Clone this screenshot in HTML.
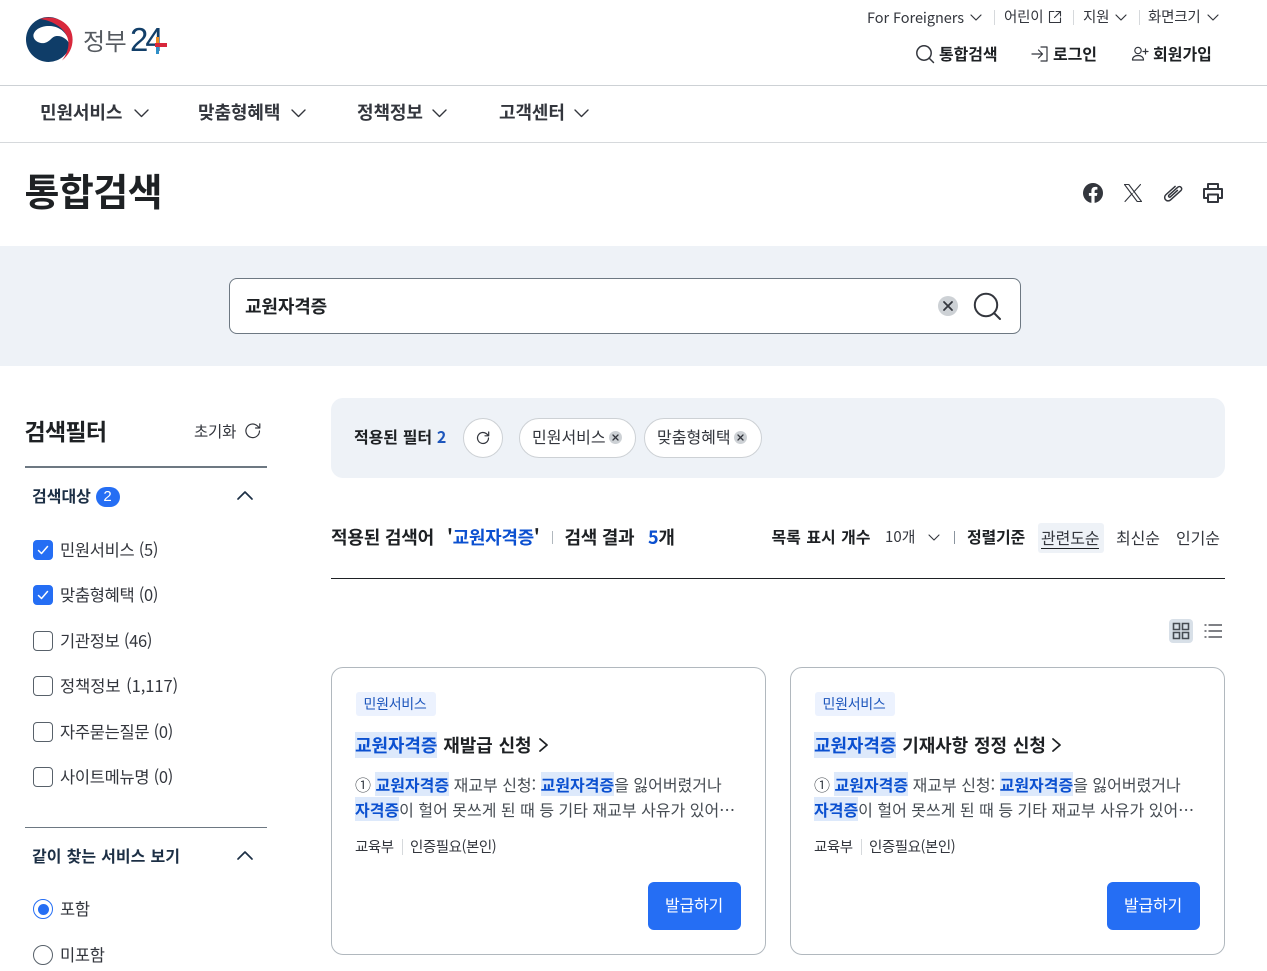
<!DOCTYPE html>
<html lang="ko"><head><meta charset="utf-8"><title>통합검색 | 정부24</title>
<style>
*{box-sizing:border-box}
html,body{margin:0;padding:0;background:#fff}
body{width:1267px;height:971px;overflow:hidden;position:relative;font-family:"Liberation Sans","Noto Sans CJK KR",sans-serif;color:#1e2124}
.t,.b,svg.a{position:absolute}
.t{white-space:nowrap;line-height:24px;height:24px;font-family:"Noto Sans CJK KR","Liberation Sans",sans-serif;font-size:15px;letter-spacing:-.3px}
.l{font-family:"Liberation Sans","Noto Sans CJK KR",sans-serif}
.s{font-weight:700}
.c{color:#33363d}
.i{font-size:16.5px;letter-spacing:-.3px;color:#33363d;left:60px}
mark{background:#dde9fb;color:#0b50d0;font-weight:700}
svg{fill:none;stroke:#33363d;stroke-width:1.5;stroke-linecap:round;stroke-linejoin:round}
.card{position:absolute;top:667px;width:435px;height:288px;border:1px solid #b1b8be;border-radius:12px;background:#fff}
.tag{position:absolute;left:24px;top:24px;width:80px;height:24px;background:#ecf2fe;border-radius:3px;color:#1d56bc;font-size:14px;line-height:24px;padding-right:2px;text-align:center;font-family:"Noto Sans CJK KR",sans-serif;letter-spacing:-.3px}
.btn{position:absolute;left:316px;top:214px;width:93px;height:48px;background:#256ef4;border-radius:6px;color:#fff;font-size:16px;line-height:44px;padding-right:1px;text-align:center;font-family:"Noto Sans CJK KR",sans-serif;letter-spacing:-.2px}
.box{position:absolute;left:33px;width:20px;height:20px;border-radius:4px;border:1.5px solid #58616a;background:#fff}
.box.on{background:#256ef4;border-color:#256ef4}
.ct{left:23px;top:65px;font-size:18px;letter-spacing:-.1px;word-spacing:1px}
.cb{left:23px;font-size:16px;color:#464c53;letter-spacing:0}
.m{font-size:14.5px;letter-spacing:-.45px;color:#33363d;top:167px}
.n{top:100px;font-size:18px;letter-spacing:-.1px;color:#33363d}
.h{top:41px;font-size:16px;letter-spacing:-.1px}
</style></head><body>

<!-- logo -->
<svg class="a" style="left:25px;top:17px;stroke:none" width="48" height="46" viewBox="0 0 48 46">
<circle cx="23.500" cy="22.500" r="22.500" fill="#0f3d68"/>
<path fill="#fff" d="M8.500 17.500C10 12 17 8.500 25 9 35 9.500 43 16 45 28 43 22.500 37 18.500 31.500 19 26.500 19.500 25 25 19.500 26 14 27 7.500 23 8.500 17.500z"/>
<path fill="#d8283c" d="M15 2C26-2 39 2 45 12c5 9.500 3 23-8 31.500 5-6.500 7.500-14 6-21C41 12 28 3.500 15 2z"/>
</svg>
<div class="t" style="left:83px;top:28px;font-size:24px;color:#555a60;letter-spacing:-.5px">정부</div>
<div class="t l" style="left:130px;top:28px;font-size:33px;color:#123f69;letter-spacing:-3px">24</div>
<div class="b" style="left:155px;top:43px;width:12px;height:3.500px;background:#d8283c"></div>
<div class="b" style="left:156px;top:37px;width:3px;height:6px;background:#ef8a1f"></div>
<div class="b" style="left:156px;top:46.500px;width:3px;height:7px;background:#2f8fc8"></div>

<!-- utility -->
<div class="t" style="left:867px;top:6px;font-size:14.5px;color:#33363d;letter-spacing:-.05px">For Foreigners</div>
<svg class="a" style="left:969px;top:13px" width="14" height="10" viewBox="0 0 14 10"><path d="M2 2l5 5 5-5" stroke-width="1.2"/></svg>
<div class="b" style="left:994px;top:10px;width:1px;height:15px;background:#d6d9dc"></div>
<div class="t" style="left:1004px;top:5px;font-size:14.5px;color:#33363d;letter-spacing:-.2px">어린이</div>
<svg class="a" style="left:1048px;top:10px" width="14" height="14" viewBox="0 0 14 14"><path d="M6 1.500H1.500v11h11V8M8 1.500h4.500V6M12.500 1.500L6.500 7.500" stroke-width="1.100"/></svg>
<div class="b" style="left:1073px;top:10px;width:1px;height:15px;background:#d6d9dc"></div>
<div class="t" style="left:1083px;top:5px;font-size:14.5px;color:#33363d;letter-spacing:-.2px">지원</div>
<svg class="a" style="left:1114px;top:13px" width="14" height="10" viewBox="0 0 14 10"><path d="M2 2l5 5 5-5" stroke-width="1.200"/></svg>
<div class="b" style="left:1139px;top:10px;width:1px;height:15px;background:#d6d9dc"></div>
<div class="t" style="left:1148px;top:5px;font-size:14.5px;color:#33363d;letter-spacing:-.2px">화면크기</div>
<svg class="a" style="left:1206px;top:13px" width="14" height="10" viewBox="0 0 14 10"><path d="M2 2l5 5 5-5" stroke-width="1.200"/></svg>

<svg class="a" style="left:915px;top:44px" width="20" height="20" viewBox="0 0 20 20"><circle cx="9" cy="9" r="7.200"/><path d="M14 14l4.500 4.500"/></svg>
<div class="t s h" style="left:939px">통합검색</div>
<svg class="a" style="left:1031px;top:45px" width="18" height="18" viewBox="0 0 18 18"><path d="M1 9h10M7.500 5l4 4-4 4M10 2h6v14h-6" stroke-width="1.200"/></svg>
<div class="t s h" style="left:1053px">로그인</div>
<svg class="a" style="left:1131px;top:45px" width="18" height="18" viewBox="0 0 18 18"><circle cx="7" cy="5.500" r="3.200" stroke-width="1.200"/><path d="M1.500 15c0-3 2.500-4.500 5.500-4.500s5.500 1.500 5.500 4.500zM14.500 4v5M12 6.500h5" stroke-width="1.200"/></svg>
<div class="t s h" style="left:1153px;letter-spacing:0">회원가입</div>

<div class="b" style="left:0;top:85px;width:1267px;height:1px;background:#cdd1d5"></div>

<!-- nav -->
<div class="t s n" style="left:40px">민원서비스</div>
<svg class="a" style="left:133px;top:107px" width="17" height="13" viewBox="0 0 17 13"><path d="M2 3l6.500 6.500L15 3" stroke-width="1.400"/></svg>
<div class="t s n" style="left:198px">맞춤형혜택</div>
<svg class="a" style="left:290px;top:107px" width="17" height="13" viewBox="0 0 17 13"><path d="M2 3l6.500 6.500L15 3" stroke-width="1.400"/></svg>
<div class="t s n" style="left:357px">정책정보</div>
<svg class="a" style="left:431px;top:107px" width="17" height="13" viewBox="0 0 17 13"><path d="M2 3l6.500 6.500L15 3" stroke-width="1.400"/></svg>
<div class="t s n" style="left:499px">고객센터</div>
<svg class="a" style="left:573px;top:107px" width="17" height="13" viewBox="0 0 17 13"><path d="M2 3l6.500 6.500L15 3" stroke-width="1.400"/></svg>
<div class="b" style="left:0;top:142px;width:1267px;height:1px;background:#d6d9dc"></div>

<!-- title -->
<div class="t s" style="left:24.500px;top:166px;font-size:38px;line-height:48px;height:48px;letter-spacing:-.6px">통합검색</div>
<svg class="a" style="left:1082px;top:182px;stroke:none" width="22" height="22" viewBox="0 0 22 22"><path fill="#33363d" d="M21 11a10 10 0 1 0-11.600 9.900v-7H6.900V11h2.500V8.800c0-2.500 1.500-3.900 3.800-3.900 1.100 0 2.200.2 2.200.2v2.500h-1.200c-1.200 0-1.600.8-1.600 1.600V11h2.800l-.5 2.900h-2.300v7A10 10 0 0 0 21 11z"/></svg>
<svg class="a" style="left:1123px;top:183px" width="20" height="20" viewBox="0 0 20 20"><path d="M1.500 1.500h4.300l12.700 17h-4.300zM17.500 1.500l-6.800 7.600M2 18.500l7.200-8" stroke-width="1.100"/></svg>
<svg class="a" style="left:1163px;top:183px" width="20" height="20" viewBox="0 0 20 20"><g transform="rotate(-42 10 10)"><path d="M16 6.500H3.500a3.500 3.500 0 0 0 0 7H17.500a2.300 2.300 0 0 0 0-4.600H5.500a1.100 1.100 0 0 0 0 2.200H15" stroke-width="1.500"/></g></svg>
<svg class="a" style="left:1202px;top:182px" width="22" height="22" viewBox="0 0 22 22"><path d="M6 7V2h10v5M6 16H2V7h18v9h-4M6 12.500h10V20H6z" stroke-width="2"/></svg>

<!-- search -->
<div class="b" style="left:0;top:246px;width:1267px;height:120px;background:#eef2f7"></div>
<div class="b" style="left:229px;top:278px;width:792px;height:56px;background:#fff;border:1px solid #6d7882;border-radius:8px"></div>
<div class="t s" style="left:245px;top:294px;font-size:18px;letter-spacing:-.15px">교원자격증</div>
<div class="b" style="left:938px;top:296px;width:20px;height:20px;border-radius:50%;background:#cdd1d5"></div>
<svg class="a" style="left:938px;top:296px" width="20" height="20" viewBox="0 0 20 20"><path d="M6 6l8 8M14 6l-8 8" stroke-width="1.800"/></svg>
<svg class="a" style="left:972px;top:291px" width="30" height="30" viewBox="0 0 30 30"><circle cx="14" cy="14" r="11.200" stroke-width="2"/><path d="M22 22l6 6" stroke-width="2"/></svg>

<!-- sidebar -->
<div class="t s" style="left:24.500px;top:418px;font-size:23px;letter-spacing:-.7px">검색필터</div>
<div class="t" style="left:194px;top:419px;font-size:15.500px;color:#33363d;letter-spacing:-.2px">초기화</div>
<svg class="a" style="left:244px;top:422px" width="18" height="18" viewBox="0 0 18 18"><path d="M15.500 9a6.800 6.800 0 1 1-2-5l2 2M15.800 1.800V6h-4.200" stroke-width="1.200"/></svg>
<div class="b" style="left:25px;top:466px;width:242px;height:2px;background:#6d7882"></div>
<div class="t s" style="left:32px;top:483px;font-size:16px;color:#1c2f45;letter-spacing:0">검색대상</div>
<div class="b" style="left:95.500px;top:487px;width:24px;height:20px;border-radius:10px;background:#256ef4;color:#fff;font-size:15px;line-height:20px;text-align:center">2</div>
<svg class="a" style="left:236px;top:488px;stroke:#1c2f45" width="18" height="14" viewBox="0 0 18 14"><path d="M2 11l7-7 7 7" stroke-width="1.700"/></svg>

<div class="box on" style="top:540px"></div><svg class="a" style="left:33px;top:540px;stroke:#fff" width="20" height="20" viewBox="0 0 20 20"><path d="M5.500 10.500l3 3 6-7" stroke-width="1.500"/></svg>
<div class="t i" style="top:537px">민원서비스 (5)</div>
<div class="box on" style="top:585px"></div><svg class="a" style="left:33px;top:585px;stroke:#fff" width="20" height="20" viewBox="0 0 20 20"><path d="M5.500 10.500l3 3 6-7" stroke-width="1.500"/></svg>
<div class="t i" style="top:582px">맞춤형혜택 (0)</div>
<div class="box" style="top:631px"></div>
<div class="t i" style="top:628px">기관정보 (46)</div>
<div class="box" style="top:676px"></div>
<div class="t i" style="top:673px;letter-spacing:-.05px;word-spacing:1px">정책정보 (1,117)</div>
<div class="box" style="top:722px"></div>
<div class="t i" style="top:719px">자주묻는질문 (0)</div>
<div class="box" style="top:767px"></div>
<div class="t i" style="top:764px">사이트메뉴명 (0)</div>

<div class="b" style="left:25px;top:827px;width:242px;height:1px;background:#6d7882"></div>
<div class="t s" style="left:32px;top:843px;font-size:16px;color:#1c2f45;letter-spacing:.05px;word-spacing:.5px">같이 찾는 서비스 보기</div>
<svg class="a" style="left:236px;top:848px;stroke:#1c2f45" width="18" height="14" viewBox="0 0 18 14"><path d="M2 11l7-7 7 7" stroke-width="1.700"/></svg>
<div class="b" style="left:33px;top:899px;width:20px;height:20px;border-radius:50%;border:1.500px solid #256ef4"></div>
<div class="b" style="left:37.500px;top:903.500px;width:11px;height:11px;border-radius:50%;background:#256ef4"></div>
<div class="t i" style="top:896px">포함</div>
<div class="b" style="left:33px;top:945px;width:20px;height:20px;border-radius:50%;border:1.500px solid #58616a"></div>
<div class="t i" style="top:942px">미포함</div>

<!-- applied filter -->
<div class="b" style="left:331px;top:398px;width:894px;height:80px;background:#eef2f7;border-radius:12px"></div>
<div class="t s" style="left:354px;top:424px;font-size:16px;letter-spacing:-.1px;word-spacing:.5px">적용된 필터 <span style="color:#1d56bc">2</span></div>
<div class="b" style="left:463px;top:418px;width:40px;height:40px;border-radius:50%;background:#fff;border:1px solid #cdd1d5"></div>
<svg class="a" style="left:475px;top:430px" width="16" height="16" viewBox="0 0 16 16"><path d="M13.500 8a5.500 5.500 0 1 1-1.600-3.900l1.600 1.600M13.700 2v3.800H10" stroke-width="1.200"/></svg>
<div class="b" style="left:519px;top:418px;width:117px;height:40px;border-radius:20px;background:#fff;border:1px solid #cdd1d5"></div>
<div class="t c" style="left:532px;top:424px;font-size:16px;letter-spacing:0">민원서비스</div>
<div class="b" style="left:609px;top:431px;width:13px;height:13px;border-radius:50%;background:#cdd1d5"></div>
<svg class="a" style="left:609px;top:431px" width="13" height="13" viewBox="0 0 13 13"><path d="M4 4l5 5M9 4l-5 5" stroke-width="1.300"/></svg>
<div class="b" style="left:644px;top:418px;width:118px;height:40px;border-radius:20px;background:#fff;border:1px solid #cdd1d5"></div>
<div class="t c" style="left:657px;top:424px;font-size:16px;letter-spacing:0">맞춤형혜택</div>
<div class="b" style="left:734px;top:431px;width:13px;height:13px;border-radius:50%;background:#cdd1d5"></div>
<svg class="a" style="left:734px;top:431px" width="13" height="13" viewBox="0 0 13 13"><path d="M4 4l5 5M9 4l-5 5" stroke-width="1.300"/></svg>

<!-- result bar -->
<div class="t s" style="left:331px;top:525px;font-size:18px;letter-spacing:-.2px">적용된 검색어</div>
<div class="t s" style="left:447px;top:525px;font-size:18px;letter-spacing:-.3px">'<span style="color:#0b50d0">교원자격증</span>'</div>
<div class="b" style="left:552px;top:531px;width:1px;height:13px;background:#b1b8be"></div>
<div class="t s" style="left:564.500px;top:525px;font-size:18px;letter-spacing:-.3px">검색 결과</div>
<div class="t s" style="left:648px;top:525px;font-size:18px;letter-spacing:-.3px"><span style="color:#0b50d0">5</span>개</div>
<div class="t s" style="left:771.500px;top:524px;font-size:16px;letter-spacing:-.1px;word-spacing:1.200px">목록 표시 개수</div>
<div class="t" style="left:885px;top:525px;font-size:15px;color:#33363d;letter-spacing:0">10개</div>
<svg class="a" style="left:927px;top:533px" width="14" height="10" viewBox="0 0 14 10"><path d="M2 2l5 5 5-5" stroke-width="1.100"/></svg>
<div class="b" style="left:954px;top:531px;width:1px;height:13px;background:#8a949e"></div>
<div class="t s" style="left:967px;top:524px;font-size:16px;letter-spacing:-.2px">정렬기준</div>
<div class="b" style="left:1038px;top:523px;width:66px;height:30px;background:#eef2f7;border-radius:3px"></div>
<div class="t c" style="left:1041px;top:525px;font-size:16px;letter-spacing:-.1px;border-bottom:1px solid #1e2124;height:24px">관련도순</div>
<div class="t c" style="left:1116px;top:525px;font-size:16px;letter-spacing:-.1px">최신순</div>
<div class="t c" style="left:1176px;top:525px;font-size:16px;letter-spacing:-.1px">인기순</div>
<div class="b" style="left:331px;top:578px;width:894px;height:1px;background:#1e2124"></div>

<div class="b" style="left:1169px;top:619px;width:24px;height:24px;background:#d8e0e8;border-radius:4px"></div>
<svg class="a" style="left:1172px;top:622px;stroke:#464c53" width="18" height="18" viewBox="0 0 18 18"><path d="M1.500 1.500h6v6h-6zM10.500 1.500h6v6h-6zM1.500 10.500h6v6h-6zM10.500 10.500h6v6h-6z" stroke-width="1.600" stroke-linejoin="miter"/></svg>
<svg class="a" style="left:1204px;top:622px;stroke:#33363d" width="18" height="18" viewBox="0 0 18 18"><path d="M5 3h13M5 9h13M5 15h13M1 3h1M1 9h1M1 15h1" stroke-width="1.300"/></svg>

<!-- cards -->
<div class="card" style="left:331px">
<div class="tag">민원서비스</div>
<div class="t s ct"><mark>교원자격증</mark> 재발급 신청</div>
<svg class="a" style="left:204px;top:68px;stroke:#1e2124" width="16" height="18" viewBox="0 0 16 18"><path d="M4 3l7 6-7 6" stroke-width="1.800"/></svg>
<div class="t cb" style="top:104px">① <mark>교원자격증</mark> 재교부 신청: <mark>교원자격증</mark>을 잃어버렸거나</div>
<div class="t cb" style="top:129px"><mark>자격증</mark>이 헐어 못쓰게 된 때 등 기타 재교부 사유가 있어…</div>
<div class="t m" style="left:23px">교육부</div>
<div class="b" style="left:70px;top:171px;width:1px;height:16px;background:#d6d9dc"></div>
<div class="t m" style="left:78px">인증필요(본인)</div>
<div class="btn">발급하기</div>
</div>
<div class="card" style="left:790px">
<div class="tag">민원서비스</div>
<div class="t s ct"><mark>교원자격증</mark> 기재사항 정정 신청</div>
<svg class="a" style="left:258px;top:68px;stroke:#1e2124" width="16" height="18" viewBox="0 0 16 18"><path d="M4 3l7 6-7 6" stroke-width="1.800"/></svg>
<div class="t cb" style="top:104px">① <mark>교원자격증</mark> 재교부 신청: <mark>교원자격증</mark>을 잃어버렸거나</div>
<div class="t cb" style="top:129px"><mark>자격증</mark>이 헐어 못쓰게 된 때 등 기타 재교부 사유가 있어…</div>
<div class="t m" style="left:23px">교육부</div>
<div class="b" style="left:70px;top:171px;width:1px;height:16px;background:#d6d9dc"></div>
<div class="t m" style="left:78px">인증필요(본인)</div>
<div class="btn">발급하기</div>
</div>
</body></html>
